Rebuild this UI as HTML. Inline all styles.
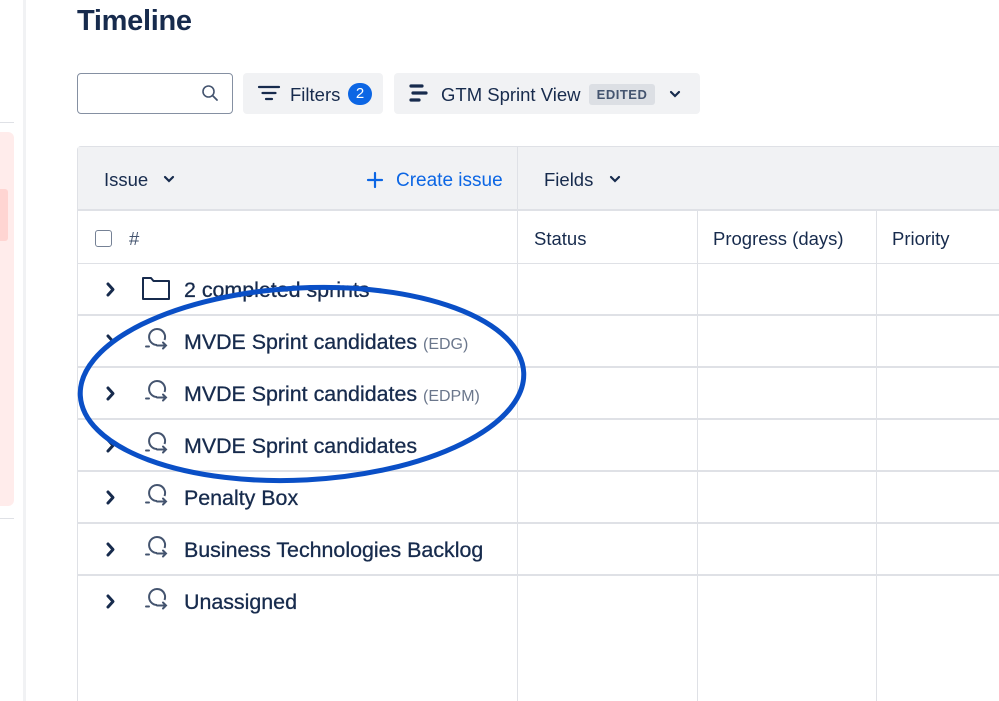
<!DOCTYPE html>
<html><head><meta charset="utf-8"><style>
*{margin:0;padding:0;box-sizing:border-box}
html,body{width:999px;height:701px;overflow:hidden}
body{background:#fff;font-family:"Liberation Sans",sans-serif;color:#172b4d;position:relative}
.a{position:absolute}
.t{font-size:18.5px;white-space:nowrap}
.row{position:absolute;left:77px;width:922px;height:52px;border-bottom:2px solid #dfe1e6}
.row .chev{position:absolute;left:26px;top:16px}
.row .ic{position:absolute;left:64px;top:9px}
.row .lbl{position:absolute;left:107px;top:14px;font-size:21.4px;white-space:nowrap;-webkit-text-stroke:0.3px #172b4d}
.sm{font-size:16px;color:#6b778c;-webkit-text-stroke:0}
.vl{position:absolute;top:211px;height:490px;width:1px;background:#dfe1e6}
</style></head><body>
<div class="a" style="left:0;top:122px;width:14px;height:1px;background:#dfe1e6"></div>
<div class="a" style="left:-10px;top:132px;width:24px;height:374px;background:#ffeceb;border-radius:6px"></div>
<div class="a" style="left:0;top:189px;width:8px;height:52px;background:#ffd5d2;border-radius:0 3px 3px 0"></div>
<div class="a" style="left:0;top:518px;width:14px;height:1px;background:#dfe1e6"></div>
<div class="a" style="left:23px;top:0;width:3px;height:701px;background:#f1f2f4"></div>

<div class="a" style="left:77px;top:5px;font-size:29px;font-weight:bold;letter-spacing:-0.3px">Timeline</div>

<div class="a" style="left:77px;top:73px;width:156px;height:41px;border:1.5px solid #8590a2;border-radius:4px"></div>
<svg class="a" style="left:201px;top:84px" width="18" height="18" viewBox="0 0 18 18"><circle cx="7.5" cy="7.5" r="5.5" fill="none" stroke="#44546f" stroke-width="1.6"/><path d="M11.5 11.5l4.5 4.5" stroke="#44546f" stroke-width="1.8" stroke-linecap="round"/></svg>
<div class="a" style="left:243px;top:73px;width:140px;height:41px;background:#f1f2f4;border-radius:4px"></div>
<svg class="a" style="left:257px;top:84px" width="24" height="20" viewBox="0 0 24 20"><path d="M2 3h20M5.5 9h13M9 15h6" stroke="#172b4d" stroke-width="2.2" stroke-linecap="round"/></svg>
<div class="a t" style="left:290px;top:84px">Filters</div>
<div class="a" style="left:348px;top:83px;width:24px;height:22px;border-radius:11px;background:#0c66e4;color:#fff;font-size:15px;text-align:center;line-height:22px">2</div>
<div class="a" style="left:394px;top:73px;width:306px;height:41px;background:#f1f2f4;border-radius:4px"></div>
<svg class="a" style="left:408px;top:83px" width="24" height="22" viewBox="0 0 24 22"><path d="M3 3h11M5 10h13M3 17h8" stroke="#172b4d" stroke-width="3.2" stroke-linecap="round"/></svg>
<div class="a t" style="left:441px;top:84px">GTM Sprint View</div>
<div class="a" style="left:589px;top:84px;width:66px;height:21px;background:#dcdfe4;border-radius:3px;font-size:13px;font-weight:bold;color:#44546f;text-align:center;line-height:21px;letter-spacing:0.5px">EDITED</div>
<svg class="a" style="left:668px;top:88px" width="14" height="12" viewBox="0 0 14 12"><path d="M3 4l4 4 4-4" fill="none" stroke="#172b4d" stroke-width="2.2" stroke-linecap="round"/></svg>

<div class="a" style="left:77px;top:146px;width:922px;height:555px;border:1.5px solid #dfe1e6;border-right:none;border-bottom:none;border-radius:4px 0 0 0"></div>
<div class="a" style="left:78px;top:147px;width:921px;height:64px;background:#f1f2f4;border-bottom:2px solid #dfe1e6"></div>
<div class="a" style="left:517px;top:147px;width:1px;height:554px;background:#dfe1e6"></div>
<div class="a t" style="left:104px;top:169px">Issue</div>
<svg class="a" style="left:162px;top:173px" width="14" height="12" viewBox="0 0 14 12"><path d="M3 4l4 4 4-4" fill="none" stroke="#172b4d" stroke-width="2.2" stroke-linecap="round"/></svg>
<svg class="a" style="left:366px;top:171px" width="18" height="18" viewBox="0 0 18 18"><path d="M9 2v14M2 9h14" stroke="#0c66e4" stroke-width="2.2" stroke-linecap="round"/></svg>
<div class="a t" style="left:396px;top:170px;color:#0c66e4;font-size:19px">Create issue</div>
<div class="a t" style="left:544px;top:169px">Fields</div>
<svg class="a" style="left:608px;top:173px" width="14" height="12" viewBox="0 0 14 12"><path d="M3 4l4 4 4-4" fill="none" stroke="#172b4d" stroke-width="2.2" stroke-linecap="round"/></svg>

<div class="vl" style="left:697px"></div>
<div class="vl" style="left:876px"></div>
<div class="a" style="left:78px;top:263px;width:921px;height:1px;background:#dfe1e6"></div>
<div class="a" style="left:95px;top:230px;width:17px;height:17px;border:1.5px solid #758195;border-radius:3px"></div>
<div class="a t" style="left:129px;top:228px;color:#44546f">#</div>
<div class="a t" style="left:534px;top:228px">Status</div>
<div class="a t" style="left:713px;top:228px">Progress (days)</div>
<div class="a t" style="left:892px;top:228px">Priority</div>

<div class="row" style="top:264px">
<svg class="chev" width="14" height="20" viewBox="0 0 14 20"><path d="M5 4l5 5.5-5 5.5" fill="none" stroke="#172b4d" stroke-width="3" stroke-linecap="round" stroke-linejoin="round"/></svg>
<svg class="ic" width="32" height="32" viewBox="0 0 32 32"><path d="M2 5h8l2.5 3H28v18H2z" fill="none" stroke="#172b4d" stroke-width="2" stroke-linejoin="round"/></svg>
<div class="lbl">2 completed sprints</div></div>
<div class="row" style="top:316px">
<svg class="chev" width="14" height="20" viewBox="0 0 14 20"><path d="M5 4l5 5.5-5 5.5" fill="none" stroke="#172b4d" stroke-width="3" stroke-linecap="round" stroke-linejoin="round"/></svg>
<svg class="ic" width="32" height="32" viewBox="0 0 32 32"><path d="M16 20A8 8 0 1 1 23.5 15" fill="none" stroke="#44546f" stroke-width="2"/><path d="M16 20.5H25M22 17.5l3 3-3 3M5 21.5h3" fill="none" stroke="#44546f" stroke-width="2" stroke-linecap="round"/></svg>
<div class="lbl">MVDE Sprint candidates <span class="sm">(EDG)</span></div></div>
<div class="row" style="top:368px">
<svg class="chev" width="14" height="20" viewBox="0 0 14 20"><path d="M5 4l5 5.5-5 5.5" fill="none" stroke="#172b4d" stroke-width="3" stroke-linecap="round" stroke-linejoin="round"/></svg>
<svg class="ic" width="32" height="32" viewBox="0 0 32 32"><path d="M16 20A8 8 0 1 1 23.5 15" fill="none" stroke="#44546f" stroke-width="2"/><path d="M16 20.5H25M22 17.5l3 3-3 3M5 21.5h3" fill="none" stroke="#44546f" stroke-width="2" stroke-linecap="round"/></svg>
<div class="lbl">MVDE Sprint candidates <span class="sm">(EDPM)</span></div></div>
<div class="row" style="top:420px">
<svg class="chev" width="14" height="20" viewBox="0 0 14 20"><path d="M5 4l5 5.5-5 5.5" fill="none" stroke="#172b4d" stroke-width="3" stroke-linecap="round" stroke-linejoin="round"/></svg>
<svg class="ic" width="32" height="32" viewBox="0 0 32 32"><path d="M16 20A8 8 0 1 1 23.5 15" fill="none" stroke="#44546f" stroke-width="2"/><path d="M16 20.5H25M22 17.5l3 3-3 3M5 21.5h3" fill="none" stroke="#44546f" stroke-width="2" stroke-linecap="round"/></svg>
<div class="lbl">MVDE Sprint candidates</div></div>
<div class="row" style="top:472px">
<svg class="chev" width="14" height="20" viewBox="0 0 14 20"><path d="M5 4l5 5.5-5 5.5" fill="none" stroke="#172b4d" stroke-width="3" stroke-linecap="round" stroke-linejoin="round"/></svg>
<svg class="ic" width="32" height="32" viewBox="0 0 32 32"><path d="M16 20A8 8 0 1 1 23.5 15" fill="none" stroke="#44546f" stroke-width="2"/><path d="M16 20.5H25M22 17.5l3 3-3 3M5 21.5h3" fill="none" stroke="#44546f" stroke-width="2" stroke-linecap="round"/></svg>
<div class="lbl">Penalty Box</div></div>
<div class="row" style="top:524px">
<svg class="chev" width="14" height="20" viewBox="0 0 14 20"><path d="M5 4l5 5.5-5 5.5" fill="none" stroke="#172b4d" stroke-width="3" stroke-linecap="round" stroke-linejoin="round"/></svg>
<svg class="ic" width="32" height="32" viewBox="0 0 32 32"><path d="M16 20A8 8 0 1 1 23.5 15" fill="none" stroke="#44546f" stroke-width="2"/><path d="M16 20.5H25M22 17.5l3 3-3 3M5 21.5h3" fill="none" stroke="#44546f" stroke-width="2" stroke-linecap="round"/></svg>
<div class="lbl">Business Technologies Backlog</div></div>
<div class="row" style="top:576px;border-bottom:none">
<svg class="chev" width="14" height="20" viewBox="0 0 14 20"><path d="M5 4l5 5.5-5 5.5" fill="none" stroke="#172b4d" stroke-width="3" stroke-linecap="round" stroke-linejoin="round"/></svg>
<svg class="ic" width="32" height="32" viewBox="0 0 32 32"><path d="M16 20A8 8 0 1 1 23.5 15" fill="none" stroke="#44546f" stroke-width="2"/><path d="M16 20.5H25M22 17.5l3 3-3 3M5 21.5h3" fill="none" stroke="#44546f" stroke-width="2" stroke-linecap="round"/></svg>
<div class="lbl">Unassigned</div></div>

<svg class="a" style="left:0;top:0" width="999" height="701"><ellipse cx="302" cy="384" rx="222" ry="96" transform="rotate(-3 302 384)" fill="none" stroke="#0a4fc6" stroke-width="5"/></svg>
</body></html>
